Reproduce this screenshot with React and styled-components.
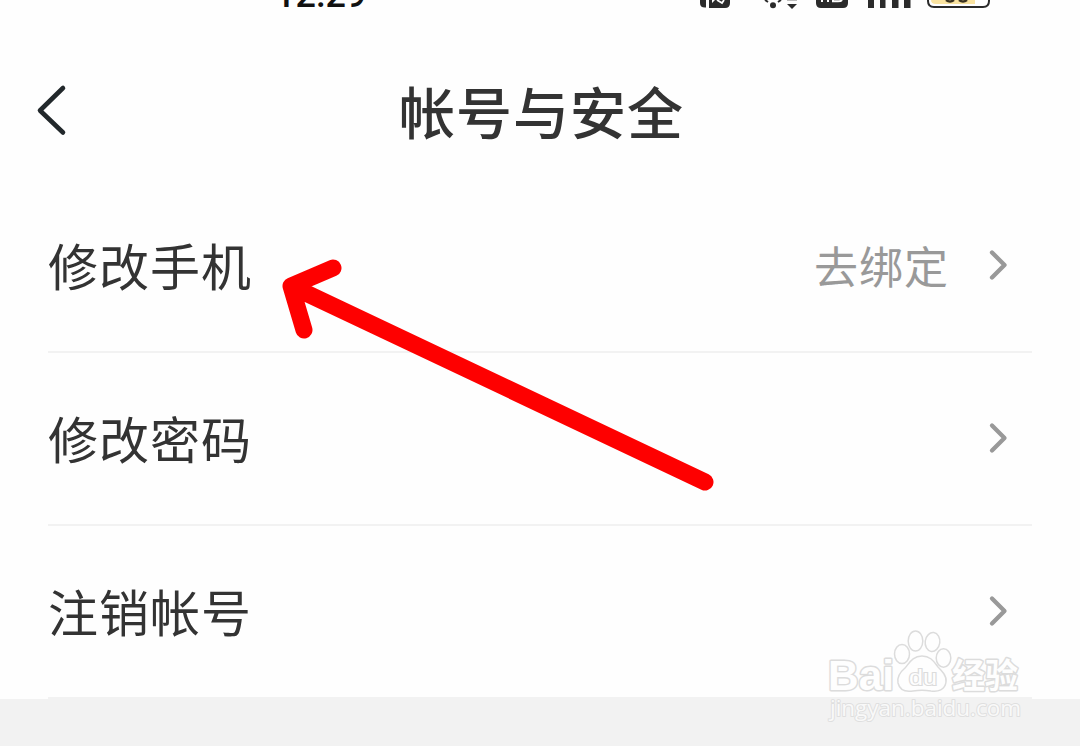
import React from 'react';
import styled, { createGlobalStyle } from 'styled-components';

const GlobalStyle = createGlobalStyle`
  * { box-sizing: border-box; }
  body {
    margin: 0;
    background: #f2f2f2;
    font-family: "Noto Sans CJK SC", sans-serif;
    overflow: hidden;
  }
`;

const Screen = styled.div`
  position: relative;
  width: 1080px;
  height: 746px;
  overflow: hidden;
  display: flex;
  flex-direction: column;
  background: #f2f2f2;
`;

const StatusBar = styled.div`
  height: 15px;
  display: flex;
  justify-content: space-between;
  padding: 0 90px 0 275px;
  background: #fefefe;
  overflow: hidden;
`;

const Clock = styled.span`
  margin-top: -32px;
  height: 48px;
  line-height: 54px;
  font-family: Roboto, "Noto Sans", sans-serif;
  font-size: 36px;
  font-weight: 500;
  color: #111;
`;

const StatusIcons = styled.svg`
  display: block;
  width: 292px;
  height: 15px;
`;

const Header = styled.header`
  height: 165px;
  display: grid;
  grid-template-columns: 120px 1fr 120px;
  background: #fefefe;
`;

const BackButton = styled.button`
  display: flex;
  align-items: flex-start;
  padding: 68px 0 0 35px;
  border: 0;
  background: none;
`;

const Title = styled.h1`
  margin: 0;
  padding: 53px 0 0 3px;
  font-size: 56px;
  line-height: 84px;
  letter-spacing: 1px;
  font-weight: 500;
  text-align: center;
  color: #333;
`;

const List = styled.main`
  height: 519px;
  padding: 0 48px;
  background: #fefefe;
`;

const Row = styled.div`
  height: 173px;
  display: flex;
  align-items: center;
  padding-bottom: 2px;
  border-bottom: 2px solid #f2f2f2;
`;

const Label = styled.span`
  flex: 1;
  padding-bottom: 2px;
  font-size: 50px;
  line-height: 76px;
  letter-spacing: 1px;
  color: #333;
`;

const Action = styled.span`
  font-size: 44px;
  line-height: 66px;
  letter-spacing: 1px;
  margin-right: 39px;
  color: #999;
`;

const Chevron = styled.svg`
  width: 20px;
  height: 32px;
  margin-right: 24px;
`;

const Overlay = styled.svg`
  position: absolute;
  inset: 0;
  pointer-events: none;
`;

const rows = [
  { label: '修改手机', action: '去绑定' },
  { label: '修改密码' },
  { label: '注销帐号' },
];

function Watermark() {
  return (
    <g fill="#fefefe" stroke="#dcdcdc" strokeWidth="1.5">
      <g strokeWidth="3" paintOrder="stroke" strokeLinejoin="round">
        <text x="828" y="690" fontFamily="Liberation Sans, sans-serif" fontWeight="700" fontSize="43" textLength="66" lengthAdjust="spacingAndGlyphs">Bai</text>
        <text x="952" y="688" fontFamily="Noto Sans CJK SC, sans-serif" fontWeight="700" fontSize="34" textLength="66" lengthAdjust="spacingAndGlyphs">经验</text>
      </g>
      <ellipse cx="902" cy="654" rx="7.5" ry="9.5" />
      <ellipse cx="915.5" cy="641" rx="7.3" ry="10" />
      <ellipse cx="932.5" cy="642" rx="7.3" ry="9.5" transform="rotate(8 932.5 642)" />
      <ellipse cx="943.5" cy="658" rx="7.3" ry="9.3" />
      <path d="M922 656C912 656 909 664 905 668C899 673 897 678 898 683C900 691 907 692 913 691C919 690 925 690 931 691C938 692 945 690 946 682C947 676 942 671 938 667C934 662 931 656 922 656Z" />
      <text x="909" y="685" fontFamily="Liberation Sans, sans-serif" fontSize="22" strokeWidth="2.2" paintOrder="stroke" textLength="28" lengthAdjust="spacingAndGlyphs">du</text>
      <text x="830" y="716" fontFamily="Open Sans, sans-serif" fontSize="21.5" fill="#f9f9f9" stroke="#dfdfdf" strokeWidth="1.9" strokeLinejoin="round" paintOrder="stroke" textLength="191" lengthAdjust="spacingAndGlyphs">jingyan.baidu.com</text>
    </g>
  );
}

export default function App() {
  return (
    <Screen>
      <GlobalStyle />
      <StatusBar>
        <Clock>12:29</Clock>
        <StatusIcons viewBox="0 0 292 15" fill="#2b2b2b">
          <path d="M2 0H8V7.5Q2 8 2 3ZM11 0H14V3L17 0H32V3Q32 8 27 8H11Z" />
          <path d="M19 0L24 3L26 0" fill="none" stroke="#fefefe" strokeWidth="1.8" />
          <circle cx="75" cy="5.3" r="3" />
          <path d="M67 0L70 2M83 0L80 2" stroke="#2b2b2b" strokeWidth="2" />
          <path d="M89 4H99L94 9Z" />
          <path d="M89 0H99V1H89Z" fill="#bbb" />
          <path d="M118 0H150V3Q150 8 145 8H123Q118 8 118 3Z" />
          <path d="M124 0V2M130 0V2M135 0V1.2H140Q143 1.2 144 0" fill="none" stroke="#fefefe" strokeWidth="2" />
          <path d="M170 0H176V8H170ZM182 0H187.5V8H182ZM194 0H200.5V8H194ZM206 0H212.5V8H206Z" />
          <path d="M230 -8V1Q230 7 236 7H285Q291 7 291 1V-8" fill="#fefefe" stroke="#2b2b2b" strokeWidth="2" />
          <path d="M233 0H277V4H238Q233 4 233 0Z" fill="#fae3a0" />
          <path d="M248 0Q252 3 256 0M261 0Q265 3 269 0" fill="none" stroke="#3a3220" strokeWidth="2.4" />
        </StatusIcons>
      </StatusBar>
      <Header>
        <BackButton aria-label="返回">
          <svg width="34" height="54" viewBox="0 0 34 54" fill="none" stroke="#22282b" strokeWidth="4.6" strokeLinecap="round" strokeLinejoin="round">
            <path d="M28 5L5 27.5L28 49.5" />
          </svg>
        </BackButton>
        <Title>帐号与安全</Title>
      </Header>
      <List>
        {rows.map(({ label, action }) => (
          <Row key={label}>
            <Label>{label}</Label>
            {action && <Action>{action}</Action>}
            <Chevron viewBox="0 0 20 32" fill="none" stroke="#999" strokeWidth="4.3" strokeLinecap="round" strokeLinejoin="round">
              <path d="M4 3.5L16.5 16L4 28.5" />
            </Chevron>
          </Row>
        ))}
      </List>
      <Overlay width="1080" height="746" viewBox="0 0 1080 746">
        <path d="M705 482L291 286M333 268L291 286L304 330" fill="none" stroke="#fe0000" strokeWidth="17" strokeLinecap="round" strokeLinejoin="round" />
        <Watermark />
      </Overlay>
    </Screen>
  );
}
